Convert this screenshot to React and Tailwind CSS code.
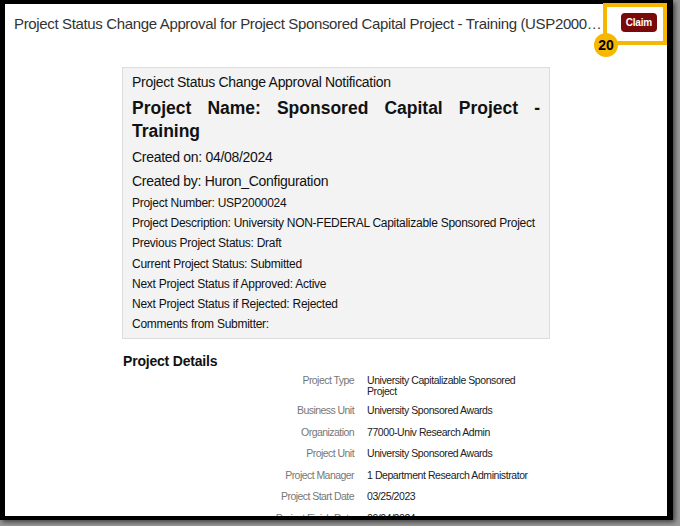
const summary = [
  "Project Number: USP2000024",
  "Project Description: University NON-FEDERAL Capitalizable Sponsored Project",
  "Previous Project Status: Draft",
  "Current Project Status: Submitted",
  "Next Project Status if Approved: Active",
  "Next Project Status if Rejected: Rejected",
  "Comments from Submitter:",
];

const details = [
  ["Project Type", "University Capitalizable Sponsored Project"],
  ["Business Unit", "University Sponsored Awards"],
  ["Organization", "77000-Univ Research Admin"],
  ["Project Unit", "University Sponsored Awards"],
  ["Project Manager", "1 Department Research Administrator"],
  ["Project Start Date", "03/25/2023"],
  ["Project Finish Date", "09/04/2024"],
];

export default function App() {
  return (
    <div className="relative h-[526px] w-[680px] overflow-hidden bg-[#9a9a9a] font-['Liberation_Sans',Arial,sans-serif]">
      <div className="h-[520px] w-[673px] overflow-hidden border-b-[4px] border-l-[5px] border-r-[6px] border-t-[4px] border-black bg-white shadow-[2px_2px_5px_rgba(0,0,0,0.6)]">
        <div className="flex h-[40px] items-center pl-[9px] pr-[10px]">
          <div className="w-[595px] truncate text-[15px] tracking-[-0.35px] text-[#333]">
            Project Status Change Approval for Project Sponsored Capital Project - Training (USP2000024)
          </div>
          <button className="mb-[3px] ml-auto rounded-[4px] bg-[#7a0a0a] px-[5px] py-[4px] text-[10px] font-bold leading-[11px] tracking-[-0.2px] text-white">
            Claim
          </button>
        </div>

        <div className="mx-auto mt-[23px] w-[428px]">
          <div className="border border-[#dcdcdc] bg-[#f3f3f3] px-[9px] pb-[4px] pt-[4px] text-[#111]">
            <div className="text-[14px] leading-[20px] tracking-[-0.3px]">Project Status Change Approval Notification</div>
            <div className="mt-[5px] text-justify text-[17.5px] font-bold leading-[23px] [text-align-last:left]">
              Project Name: Sponsored Capital Project - Training
            </div>
            <div className="mt-[2px] text-[14px] leading-[24px] tracking-[-0.3px]">Created on: 04/08/2024</div>
            <div className="text-[14px] leading-[24px] tracking-[-0.3px]">Created by: Huron_Configuration</div>
            {summary.map((line) => (
              <div key={line} className="text-[12px] leading-[20.2px] tracking-[-0.27px]">
                {line}
              </div>
            ))}
          </div>

          <div className="mt-[14px] pl-[1px] text-[14px] font-bold leading-[16px] tracking-[-0.2px] text-[#111]">Project Details</div>
          <div className="mt-[1px] grid grid-cols-[232px_165px] gap-x-[13px] text-[10.5px] leading-[11px]">
            {details.map(([label, value], i) => (
              <div key={label} className="contents">
                <div className={`${i === 0 ? "pb-[3px]" : "pb-[5.5px]"} pt-[5px] text-right tracking-[-0.55px] text-[#777]`}>
                  {label}
                </div>
                <div className={`${i === 0 ? "pb-[3px]" : "pb-[5.5px]"} pt-[5px] tracking-[-0.43px] text-[#222]`}>
                  {value}
                </div>
              </div>
            ))}
          </div>
        </div>
      </div>

      {/* training annotation */}
      <div className="absolute left-[603px] top-[3px] h-[42px] w-[64px] border-[4px] border-[#f5b700]" />
      <div className="absolute left-[594px] top-[33px] flex h-[24px] w-[24px] items-center justify-center rounded-full bg-[#f5b700] text-[14px] font-bold text-black">
        20
      </div>
    </div>
  );
}
